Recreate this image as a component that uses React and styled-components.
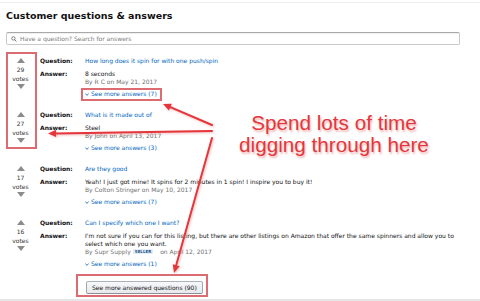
import React from "react";
import styled, { createGlobalStyle } from "styled-components";

const Global = createGlobalStyle`
  html, body { margin: 0; padding: 0; background: #fff; }
  #root { width: 480px; height: 301px; overflow: hidden; }
  * { box-sizing: border-box; }
`;

const Page = styled.div`
  position: relative;
  width: 480px;
  height: 301px;
  padding-top: 2px;
  border-bottom: 2px solid #e6e6e6;
  font-family: "DejaVu Sans", Verdana, sans-serif;
  font-size: 6px;
  color: #111;
  overflow: hidden;
`;

const Frame = styled.div`
  border-top: 1px solid #ededed;
  padding: 0 20px 0 6px;
  display: flex;
  flex-direction: column;
`;

const Title = styled.h2`
  margin: 7px 0 0;
  font-size: 9.5px;
  line-height: 12px;
  font-weight: bold;
  color: #111;
`;

const SearchBox = styled.div`
  margin-top: 10px;
  height: 13px;
  display: flex;
  align-items: center;
  gap: 3px;
  padding-left: 4px;
  border: 1px solid #c9c9c9;
  border-top-color: #a9a9a9;
  border-radius: 2px;
  box-shadow: inset 0 1px 0 rgba(0, 0, 0, 0.06);
`;

const Placeholder = styled.span`
  color: #7a7a7a;
  line-height: 11px;
`;

const List = styled.div`
  margin-top: 12px;
  display: flex;
  flex-direction: column;
  gap: 13px;
`;

const Item = styled.div`
  display: grid;
  grid-template-columns: 29px 1fr;
  column-gap: 5px;
  align-items: start;
`;

const VoteCol = styled.div`
  padding-top: 1px;
  display: flex;
  flex-direction: column;
  align-items: center;
  color: #333;
`;

const Tri = styled.div`
  width: 0;
  height: 0;
  border-left: 4px solid transparent;
  border-right: 4px solid transparent;
  ${(p) =>
    p.$down
      ? "border-top: 5px solid #8c8c8c; margin-top: 1px;"
      : "border-bottom: 5px solid #8c8c8c; margin-bottom: 2px;"}
`;

const VoteText = styled.div`
  line-height: 9px;
`;

const QA = styled.div`
  display: grid;
  grid-template-columns: 45px 1fr;
  row-gap: 5px;
  line-height: 8px;
`;

const Label = styled.div`
  font-weight: bold;
  color: #111;
`;

const QLink = styled.a`
  color: #0066c0;
  text-decoration: none;
`;

const AnswerBlock = styled.div`
  display: flex;
  flex-direction: column;
`;

const Byline = styled.div`
  color: #6f6f6f;
`;

const Badge = styled.span`
  display: inline-block;
  font-size: 4px;
  line-height: 5px;
  font-weight: bold;
  color: #1d4f86;
  background: #e4eef7;
  padding: 0 2px;
  margin-right: 5px;
  vertical-align: 1px;
`;

const SeeMore = styled.a`
  margin-top: 4px;
  display: flex;
  align-items: center;
  gap: 2px;
  color: #0066c0;
  text-decoration: none;
`;

const MoreRow = styled.div`
  margin-top: 13px;
  padding-left: 80px;
  display: flex;
`;

const MoreButton = styled.button`
  height: 13px;
  padding: 0 5px;
  font-family: inherit;
  font-size: 6px;
  line-height: 11px;
  color: #111;
  background: linear-gradient(#f7f8fa, #e7e9ec);
  border: 1px solid #adb1b8;
  border-color: #adb1b8 #a2a6ac #8d9096;
  border-radius: 2px;
`;

const Overlay = styled.div`
  position: absolute;
  inset: 0;
  pointer-events: none;
`;

const RedBox = styled.div`
  position: absolute;
  left: ${(p) => p.$x}px;
  top: ${(p) => p.$y}px;
  width: ${(p) => p.$w}px;
  height: ${(p) => p.$h}px;
  border: 2px solid rgba(214, 82, 88, 0.85);
`;

const Callout = styled.div`
  position: absolute;
  left: 234px;
  top: 112px;
  width: 200px;
  text-align: center;
  font-family: "Liberation Sans", Arial, sans-serif;
  font-size: 20.7px;
  line-height: 22px;
  color: #e5363c;
  text-shadow: 1px 2px 2px rgba(226, 120, 120, 0.55);
  white-space: nowrap;
`;

const ArrowSvg = styled.svg`
  position: absolute;
  left: 0;
  top: 0;
  filter: drop-shadow(1px 1px 1px rgba(220, 110, 110, 0.45));
`;

const SearchIcon = () => (
  <svg width="6" height="6" viewBox="0 0 6 6">
    <circle cx="2.4" cy="2.4" r="1.7" fill="none" stroke="#666" strokeWidth="0.8" />
    <line x1="3.6" y1="3.6" x2="5.4" y2="5.4" stroke="#666" strokeWidth="0.9" />
  </svg>
);

const Chevron = () => (
  <svg width="4" height="3" viewBox="0 0 4 3">
    <polyline points="0.4,0.5 2,2.4 3.6,0.5" fill="none" stroke="#0066c0" strokeWidth="0.8" />
  </svg>
);

function Arrow({ x1, y1, x2, y2 }) {
  const dx = x2 - x1;
  const dy = y2 - y1;
  const len = Math.hypot(dx, dy);
  const ux = dx / len;
  const uy = dy / len;
  const hl = 8;
  const hw = 3.6;
  const bx = x2 - hl * ux;
  const by = y2 - hl * uy;
  const nx = -uy * hw;
  const ny = ux * hw;
  return (
    <g>
      <line x1={x1} y1={y1} x2={bx} y2={by} stroke="#e5363c" strokeWidth="2" strokeLinecap="round" />
      <polygon
        points={`${x2},${y2} ${bx + nx},${by + ny} ${bx - nx},${by - ny}`}
        fill="#e5363c"
      />
    </g>
  );
}

const items = [
  {
    votes: 29,
    q: "How long does it spin for with one push/spin",
    a: "8 seconds",
    by: "By R C on May 21, 2017",
    more: 7,
  },
  {
    votes: 27,
    q: "What is it made out of",
    a: "Steel",
    by: "By John on April 13, 2017",
    more: 3,
  },
  {
    votes: 17,
    q: "Are they good",
    a: "Yeah! I just got mine! It spins for 2 minutes in 1 spin! I inspire you to buy it!",
    by: "By Colton Stringer on May 10, 2017",
    more: 7,
  },
  {
    votes: 16,
    q: "Can I specify which one I want?",
    a: "I'm not sure if you can for this listing, but there are other listings on Amazon that offer the same spinners and allow you to select which one you want.",
    by: "By Supr Supply",
    seller: true,
    date: "on April 12, 2017",
    more: 1,
  },
];

export default function App() {
  return (
    <>
      <Global />
      <Page>
        <Frame>
          <Title>Customer questions &amp; answers</Title>
          <SearchBox>
            <SearchIcon />
            <Placeholder>Have a question? Search for answers</Placeholder>
          </SearchBox>
          <List>
            {items.map((it) => (
              <Item key={it.votes}>
                <VoteCol>
                  <Tri />
                  <VoteText>{it.votes}</VoteText>
                  <VoteText>votes</VoteText>
                  <Tri $down />
                </VoteCol>
                <QA>
                  <Label>Question:</Label>
                  <QLink href="#">{it.q}</QLink>
                  <Label>Answer:</Label>
                  <AnswerBlock>
                    <div>{it.a}</div>
                    <Byline>
                      {it.by}
                      {it.seller && (
                        <>
                          {" "}
                          <Badge>SELLER</Badge> {it.date}
                        </>
                      )}
                    </Byline>
                    <SeeMore href="#">
                      <Chevron />
                      See more answers ({it.more})
                    </SeeMore>
                  </AnswerBlock>
                </QA>
              </Item>
            ))}
          </List>
          <MoreRow>
            <MoreButton>See more answered questions (90)</MoreButton>
          </MoreRow>
        </Frame>
        <Overlay>
          <RedBox $x={6} $y={52} $w={31} $h={97} />
          <RedBox $x={81} $y={88} $w={81} $h={13} />
          <RedBox $x={76} $y={274} $w={132} $h={23} />
          <ArrowSvg width="480" height="301" viewBox="0 0 480 301">
            <Arrow x1={212} y1={125} x2={163} y2={104} />
            <Arrow x1={212} y1={131} x2={48} y2={133.5} />
            <Arrow x1={212} y1={138} x2={174} y2={273} />
          </ArrowSvg>
          <Callout>
            Spend lots of time
            <br />
            digging through here
          </Callout>
        </Overlay>
      </Page>
    </>
  );
}
